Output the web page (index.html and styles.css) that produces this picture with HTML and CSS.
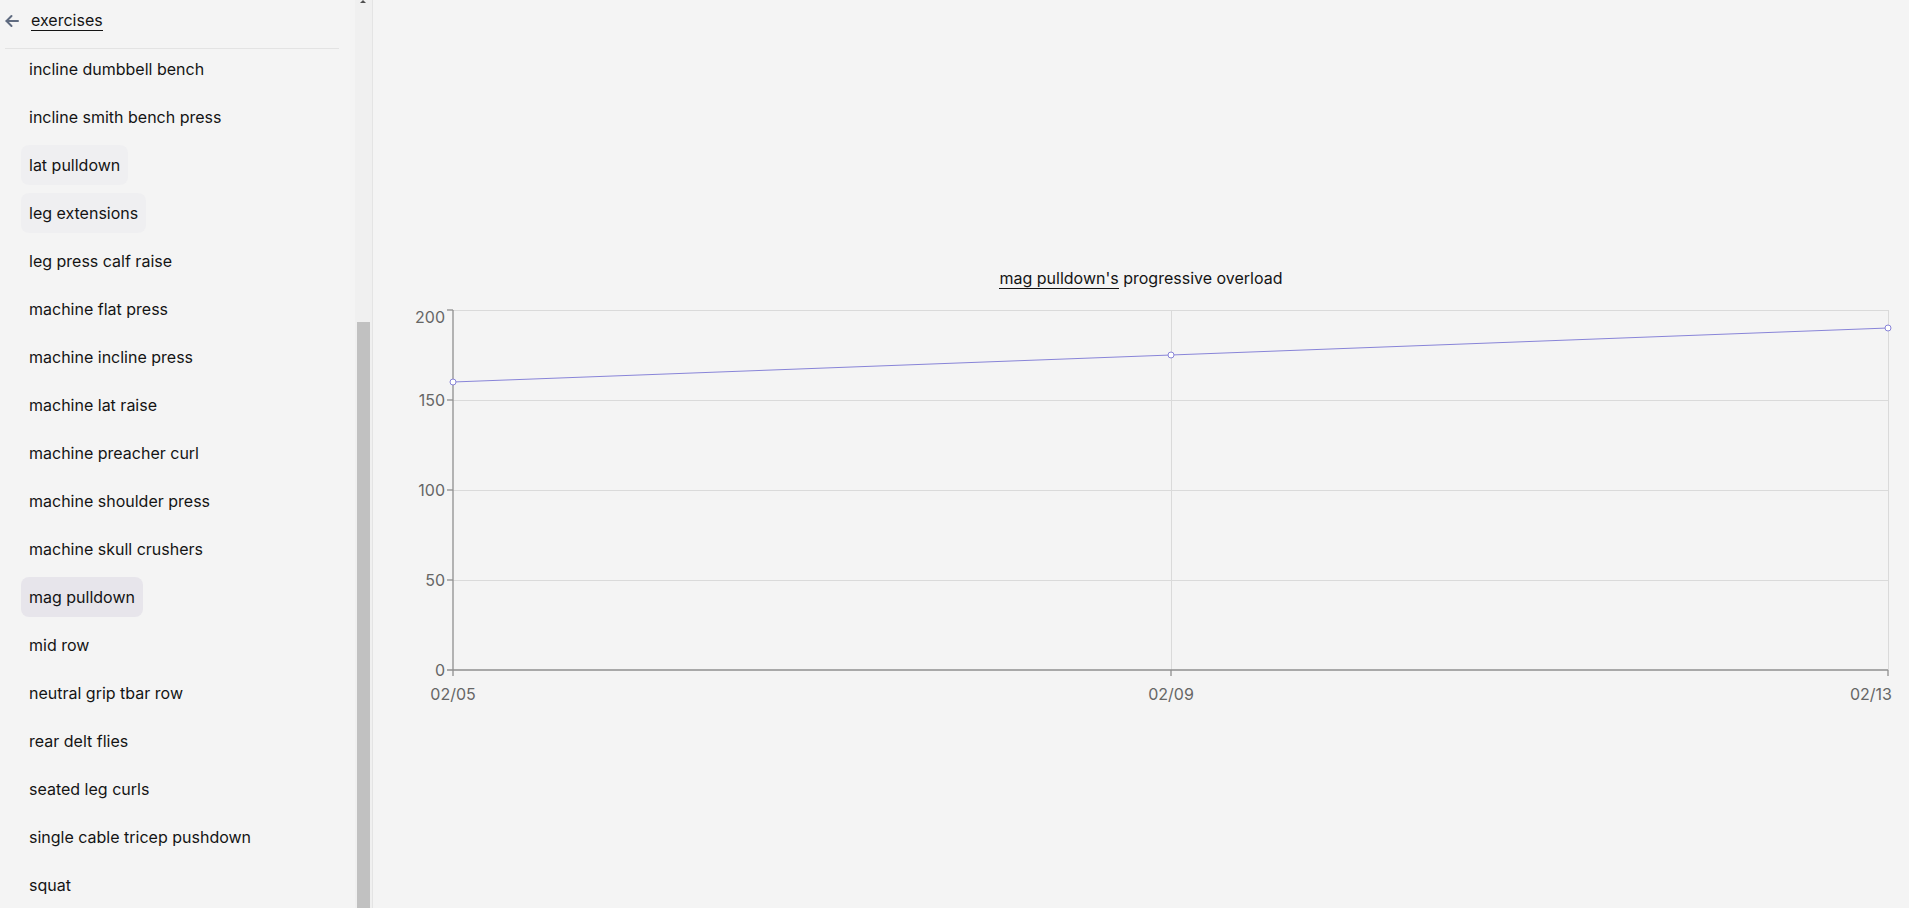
FILE: index.html
```html
<!DOCTYPE html>
<html lang="en">
<head>
    <meta charset="UTF-8">
    <meta name="viewport" content="width=device-width, initial-scale=1.0">
    <title>exercises</title>
    <link rel="stylesheet" href="styles.css">
</head>
<body>
    <div class="layout">
        <aside class="sidebar">
            <div class="sidebar-content">
                <div class="sidebar-header">
                    <svg class="back-icon" width="14" height="14" viewBox="0 0 14 14" fill="none" stroke="#5f6b80" stroke-width="2" stroke-linecap="round" stroke-linejoin="round">
                        <path d="M13 7H1.5"/>
                        <path d="M6.5 2L1.5 7l5 5"/>
                    </svg>
                    <a class="back-link">exercises</a>
                </div>
                <ul class="exercise-list">
                    <li class="exercise">incline dumbbell bench</li>
                    <li class="exercise">incline smith bench press</li>
                    <li class="exercise hovered">lat pulldown</li>
                    <li class="exercise hovered">leg extensions</li>
                    <li class="exercise">leg press calf raise</li>
                    <li class="exercise">machine flat press</li>
                    <li class="exercise">machine incline press</li>
                    <li class="exercise">machine lat raise</li>
                    <li class="exercise">machine preacher curl</li>
                    <li class="exercise">machine shoulder press</li>
                    <li class="exercise">machine skull crushers</li>
                    <li class="exercise selected">mag pulldown</li>
                    <li class="exercise">mid row</li>
                    <li class="exercise">neutral grip tbar row</li>
                    <li class="exercise">rear delt flies</li>
                    <li class="exercise">seated leg curls</li>
                    <li class="exercise">single cable tricep pushdown</li>
                    <li class="exercise">squat</li>
                </ul>
            </div>
            <div class="scroll-track">
                <div class="scroll-arrow"></div>
                <div class="scroll-thumb"></div>
            </div>
        </aside>

        <main class="main">
            <div class="chart-title"><span class="chart-name">mag pulldown's</span> progressive overload</div>
            <svg class="chart" width="1536" height="430" viewBox="0 0 1536 430">
                <!-- grid -->
                <g class="grid" stroke="#dadada" stroke-width="1" shape-rendering="crispEdges">
                    <line x1="80" y1="20" x2="1515" y2="20"/>
                    <line x1="80" y1="110" x2="1515" y2="110"/>
                    <line x1="80" y1="200" x2="1515" y2="200"/>
                    <line x1="80" y1="290" x2="1515" y2="290"/>
                    <line x1="798" y1="20" x2="798" y2="380"/>
                    <line x1="1515" y1="20" x2="1515" y2="380"/>
                </g>
                <!-- axes -->
                <g class="axis" stroke="#8f8f8f" stroke-width="1.3">
                    <line x1="80" y1="20" x2="80" y2="386"/>
                    <line x1="74" y1="380" x2="1515" y2="380"/>
                    <line x1="74" y1="20" x2="80" y2="20"/>
                    <line x1="74" y1="110" x2="80" y2="110"/>
                    <line x1="74" y1="200" x2="80" y2="200"/>
                    <line x1="74" y1="290" x2="80" y2="290"/>
                    <line x1="798" y1="380" x2="798" y2="386"/>
                    <line x1="1515" y1="380" x2="1515" y2="386"/>
                </g>
                <g class="tick-labels">
                    <text x="72" y="33" text-anchor="end">200</text>
                    <text x="72" y="116" text-anchor="end">150</text>
                    <text x="72" y="206" text-anchor="end">100</text>
                    <text x="72" y="296" text-anchor="end">50</text>
                    <text x="72" y="386" text-anchor="end">0</text>
                    <text x="80" y="410" text-anchor="middle">02/05</text>
                    <text x="798" y="410" text-anchor="middle">02/09</text>
                    <text x="1519" y="410" text-anchor="end">02/13</text>
                </g>
                <!-- data -->
                <polyline points="80,92 798,65 1515,38" fill="none" stroke="#8884d8" stroke-width="1"/>
                <g fill="#fff" stroke="#8884d8" stroke-width="1">
                    <circle cx="80" cy="92" r="3"/>
                    <circle cx="798" cy="65" r="3"/>
                    <circle cx="1515" cy="38" r="3"/>
                </g>
            </svg>
        </main>
    </div>
</body>
</html>
```

FILE: styles.css
```css
body {
    margin: 0;
    font-family: Inter, "Noto Sans", sans-serif;
    font-size: 16px;
    color: #141414;
    background-color: #f4f4f4;
    overflow: hidden;
}
.layout {
    display: flex;
    height: 908px;
}
.sidebar {
    display: flex;
    width: 373px;
    flex-shrink: 0;
    border-right: 1px solid #e4e4e4;
    box-sizing: border-box;
    overflow: hidden;
}
.sidebar-content {
    width: 355px;
    padding: 0 16px 0 5px;
    box-sizing: border-box;
}
.sidebar-header {
    display: flex;
    align-items: flex-start;
    gap: 12px;
    height: 49px;
    padding-top: 11px;
    box-sizing: border-box;
    border-bottom: 1px solid #e3e3e3;
}
.back-icon {
    margin-top: 3px;
}
.back-link {
    line-height: 19px;
    border-bottom: 1px solid #141414;
    cursor: pointer;
}
.exercise-list {
    list-style: none;
    margin: 0;
    padding: 0 0 0 16px;
    display: flex;
    flex-direction: column;
    align-items: flex-start;
    gap: 8px;
}
.exercise {
    padding: 8px;
    line-height: 24px;
    border-radius: 8px;
    white-space: nowrap;
    cursor: pointer;
}
.exercise.hovered {
    background-color: #efeff1;
}
.exercise.selected {
    background-color: #e7e5eb;
}
.scroll-track {
    position: relative;
    width: 17px;
    background-color: #f0f0f0;
}
.scroll-arrow {
    position: absolute;
    top: 0;
    left: 5px;
    width: 0;
    height: 0;
    border-left: 3px solid transparent;
    border-right: 3px solid transparent;
    border-bottom: 3px solid #505050;
}
.scroll-thumb {
    margin: 322px 0 0 2px;
    width: 13px;
    height: 600px;
    background-color: #c1c1c1;
}
.main {
    flex: 1;
    display: flex;
    flex-direction: column;
    align-items: center;
    padding-top: 268px;
}
.chart-title {
    line-height: 20px;
}
.chart-name {
    border-bottom: 1px solid #141414;
}
.chart {
    display: block;
    margin-top: 2px;
}
.tick-labels text {
    font-family: Inter, "Noto Sans", sans-serif;
    font-size: 16px;
    fill: #666;
}
```
